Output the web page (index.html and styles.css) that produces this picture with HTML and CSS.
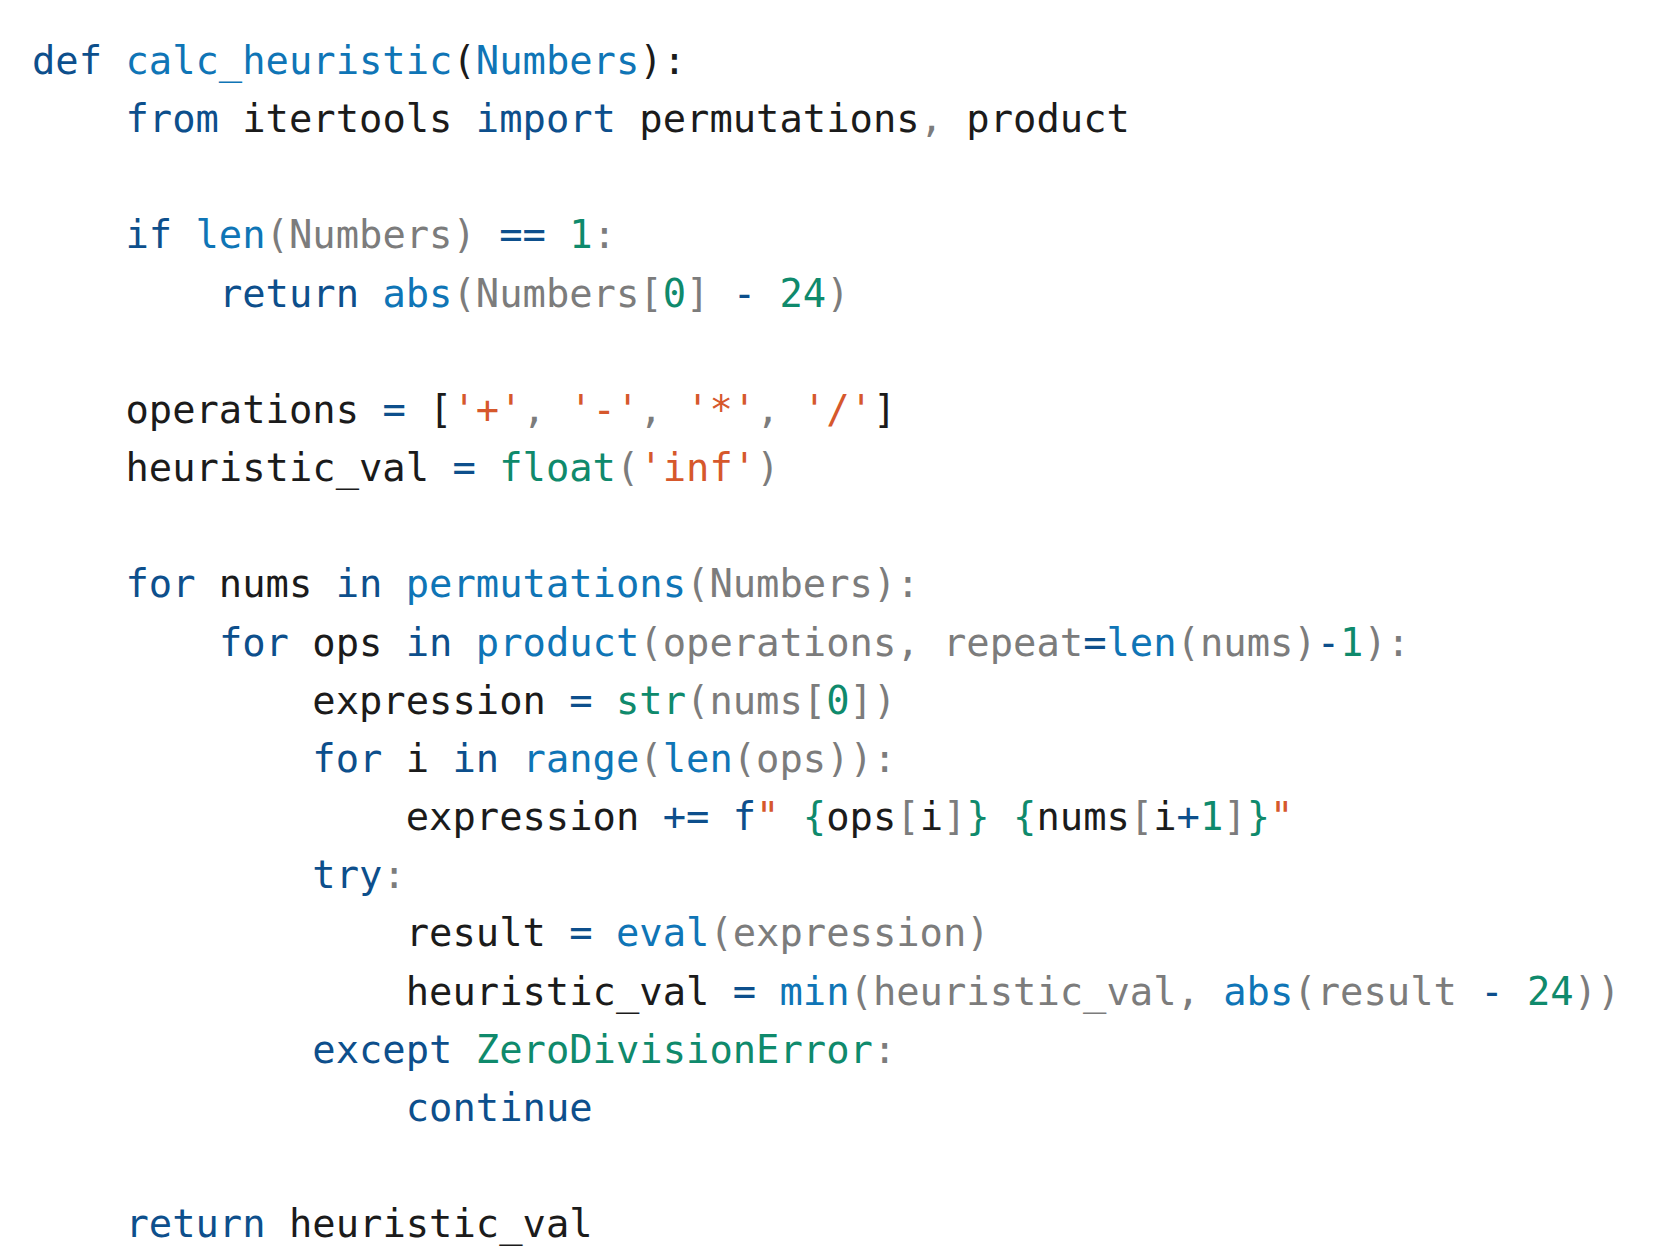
FILE: index.html
```html
<!DOCTYPE html>
<html>
<head>
<meta charset="utf-8">
<link rel="stylesheet" href="styles.css">
</head>
<body>
<pre class="code"><span class="k">def</span> <span class="f">calc_heuristic</span>(<span class="f">Numbers</span>):
    <span class="k">from</span> itertools <span class="k">import</span> permutations<span class="g">,</span> product

    <span class="k">if</span> <span class="f">len</span><span class="g">(Numbers)</span> <span class="k">==</span> <span class="n">1</span><span class="g">:</span>
        <span class="k">return</span> <span class="f">abs</span><span class="g">(Numbers[</span><span class="n">0</span><span class="g">]</span> <span class="k">-</span> <span class="n">24</span><span class="g">)</span>

    operations <span class="k">=</span> [<span class="s">'+'</span><span class="g">,</span> <span class="s">'-'</span><span class="g">,</span> <span class="s">'*'</span><span class="g">,</span> <span class="s">'/'</span>]
    heuristic_val <span class="k">=</span> <span class="n">float</span><span class="g">(</span><span class="s">'inf'</span><span class="g">)</span>

    <span class="k">for</span> nums <span class="k">in</span> <span class="f">permutations</span><span class="g">(Numbers):</span>
        <span class="k">for</span> ops <span class="k">in</span> <span class="f">product</span><span class="g">(operations, repeat</span><span class="k">=</span><span class="f">len</span><span class="g">(nums)</span><span class="k">-</span><span class="n">1</span><span class="g">):</span>
            expression <span class="k">=</span> <span class="n">str</span><span class="g">(nums[</span><span class="n">0</span><span class="g">])</span>
            <span class="k">for</span> i <span class="k">in</span> <span class="f">range</span><span class="g">(</span><span class="f">len</span><span class="g">(ops)):</span>
                expression <span class="k">+=</span> <span class="k">f</span><span class="s">"</span> <span class="n">{</span>ops<span class="g">[</span>i<span class="g">]</span><span class="n">}</span> <span class="n">{</span>nums<span class="g">[</span>i<span class="k">+</span><span class="n">1</span><span class="g">]</span><span class="n">}</span><span class="s">"</span>
            <span class="k">try</span><span class="g">:</span>
                result <span class="k">=</span> <span class="f">eval</span><span class="g">(expression)</span>
                heuristic_val <span class="k">=</span> <span class="f">min</span><span class="g">(heuristic_val, </span><span class="f">abs</span><span class="g">(result </span><span class="k">-</span> <span class="n">24</span><span class="g">))</span>
            <span class="k">except</span> <span class="n">ZeroDivisionError</span><span class="g">:</span>
                <span class="k">continue</span>

    <span class="k">return</span> heuristic_val</pre>
</body>
</html>
```

FILE: styles.css
```css
html, body {
  margin: 0;
  padding: 0;
  background: #ffffff;
}

.code {
  margin: 0;
  padding: 32px 0 0 32px;
  font-family: "DejaVu Sans Mono", "Liberation Mono", monospace;
  font-size: 38.8px;
  line-height: 58.15px;
  color: #1b1b1b;
  white-space: pre;
}

.k { color: #0d4f8c; }
.f { color: #0f75b6; }
.n { color: #0f8a6c; }
.s { color: #d6582c; }
.g { color: #7c7c7c; }
```
